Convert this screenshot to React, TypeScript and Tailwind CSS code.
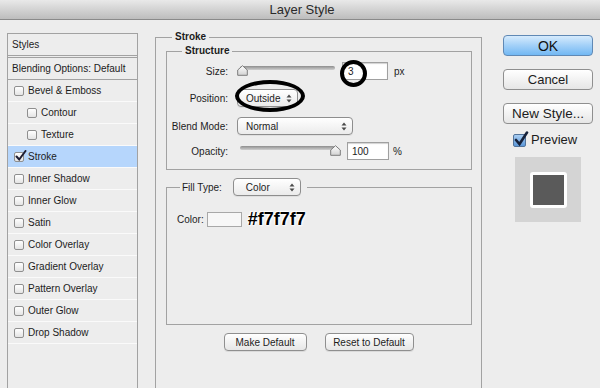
import React from "react";

function Box({ checked }: { checked?: boolean }) {
  return (
    <span className="relative inline-block w-[10px] h-[10px] rounded-[2px] border border-[#8f8f8f] bg-linear-to-b from-white to-[#e4e4e4] shrink-0">
      {checked && (
        <svg className="absolute -top-[3px] left-0" width="12" height="12" viewBox="0 0 12 12">
          <path d="M1.5 6.5 L4.2 9.5 L10.5 1" stroke="#1d1d33" strokeWidth="2" fill="none" strokeLinecap="round" />
        </svg>
      )}
    </span>
  );
}

function Arrows() {
  return (
    <svg width="6" height="9" viewBox="0 0 6 9">
      <path d="M0.5 3.5 L3 0.5 L5.5 3.5 Z" fill="#4a4a4a" />
      <path d="M0.5 5.5 L3 8.5 L5.5 5.5 Z" fill="#4a4a4a" />
    </svg>
  );
}

function Thumb() {
  return (
    <svg width="11" height="11" viewBox="0 0 11 11">
      <defs>
        <linearGradient id="tg" x1="0" y1="0" x2="0" y2="1">
          <stop offset="0" stopColor="#ffffff" />
          <stop offset="1" stopColor="#d2d2d2" />
        </linearGradient>
      </defs>
      <path d="M5.5 0.7 L10.3 5 L10.3 10.3 L0.7 10.3 L0.7 5 Z" fill="url(#tg)" stroke="#7c7c7c" strokeWidth="1" strokeLinejoin="round" />
    </svg>
  );
}

const rows: { label: string; indent?: boolean; checked?: boolean }[] = [
  { label: "Bevel & Emboss" },
  { label: "Contour", indent: true },
  { label: "Texture", indent: true },
  { label: "Stroke", checked: true },
  { label: "Inner Shadow" },
  { label: "Inner Glow" },
  { label: "Satin" },
  { label: "Color Overlay" },
  { label: "Gradient Overlay" },
  { label: "Pattern Overlay" },
  { label: "Outer Glow" },
  { label: "Drop Shadow" },
];

export default function App() {
  return (
    <div className="w-[600px] h-[388px] bg-[#ededed] overflow-hidden font-['Liberation_Sans',Arial,sans-serif] text-[#1c1c1c]">
      {/* Title bar */}
      <div className="h-[20px] border-b border-[#8a8a8a] bg-linear-to-b from-[#e9e9e9] to-[#bdbdbd] flex items-center justify-center text-[13px] text-[#2a2a2a] leading-none">
        <span className="ml-[4px]">Layer Style</span>
      </div>

      <div className="flex h-[368px] pl-[7px] overflow-hidden">
        {/* Left styles list */}
        <div className="w-[131px] h-[400px] mt-[13px] shrink-0 border-x border-t border-[#a2a2a2] text-[10px]">
          <div className="h-[22px] border-b border-[#a2a2a2] flex items-center pl-[4px]">Styles</div>
          <div className="h-[23px] mt-px border-y border-[#a2a2a2] flex items-center pl-[4px]">Blending Options: Default</div>
          {rows.map((r) => (
            <div
              key={r.label}
              className={
                "h-[22px] border-b border-[#fafafa] flex items-center gap-[3px] " +
                (r.indent ? "pl-[19px] " : "pl-[6px] ") +
                (r.checked ? "bg-[#b6d6fc]" : "")
              }
            >
              <Box checked={r.checked} />
              <span className="ml-px">{r.label}</span>
            </div>
          ))}
        </div>

        {/* Middle: Stroke */}
        <fieldset className="ml-[17px] mt-[10px] w-[327px] h-[400px] shrink-0 border border-[#a2a2a2]">
          <legend className="ml-[16px] px-[3px] text-[10px] font-bold leading-[14px]">Stroke</legend>

          <fieldset className="ml-[10px] mr-[9px] border border-[#a2a2a2] pt-[4px] pb-[9px]">
            <legend className="ml-[15px] px-[3px] text-[10px] font-bold leading-[14px]">Structure</legend>

            {/* Size */}
            <div className="flex h-[18px] items-center text-[10px]">
              <span className="w-[61px] text-right">Size:</span>
              <div className="relative ml-[9px] w-[100px] h-[18px]">
                <div className="absolute left-[3px] top-[4px] w-[95px] h-[4px] rounded-full bg-linear-to-b from-[#8e8e8e] to-[#cfcfcf]" />
                <div className="absolute left-0 top-[3px] flex">
                  <Thumb />
                </div>
              </div>
              <div className="relative ml-[5px] w-[46px] h-[18px] border border-[#a0a0a0] bg-white shadow-[inset_0_1px_1px_rgba(0,0,0,0.18)] flex items-center pl-[5px]">
                3
                <div className="absolute -left-[3px] -top-[3px] w-[27px] h-[27px] rounded-full border-[4px] border-black" />
              </div>
              <span className="ml-[6px]">px</span>
            </div>

            {/* Position */}
            <div className="flex h-[18px] mt-[9px] items-center text-[10px]">
              <span className="w-[61px] text-right">Position:</span>
              <div className="relative ml-[9px] w-[61px] h-[18px] rounded-[4px] border border-[#8e8e8e] bg-linear-to-b from-white to-[#ebebeb] flex items-center justify-between pl-[8px] pr-[5px] shadow-[0_1px_0_rgba(0,0,0,0.06)]">
                <span>Outside</span>
                <Arrows />
                <div className="absolute -left-[3px] -top-[10px] w-[70px] h-[32px] rounded-[50%] border-[4px] border-black" />
              </div>
            </div>

            {/* Blend Mode */}
            <div className="flex h-[18px] mt-[10px] items-center text-[10px]">
              <span className="w-[61px] text-right">Blend Mode:</span>
              <div className="ml-[9px] w-[116px] h-[18px] rounded-[4px] border border-[#8e8e8e] bg-linear-to-b from-white to-[#ebebeb] flex items-center justify-between pl-[8px] pr-[5px] shadow-[0_1px_0_rgba(0,0,0,0.06)]">
                <span>Normal</span>
                <Arrows />
              </div>
            </div>

            {/* Opacity */}
            <div className="flex h-[18px] mt-[7px] items-center text-[10px]">
              <span className="w-[61px] text-right">Opacity:</span>
              <div className="relative ml-[9px] w-[105px] h-[18px]">
                <div className="absolute left-[3px] top-[4px] w-[95px] h-[4px] rounded-full bg-linear-to-b from-[#8e8e8e] to-[#cfcfcf]" />
                <div className="absolute left-[93px] top-[3px] flex">
                  <Thumb />
                </div>
              </div>
              <div className="ml-[5px] w-[42px] h-[18px] border border-[#a0a0a0] bg-white shadow-[inset_0_1px_1px_rgba(0,0,0,0.18)] flex items-center pl-[4px]">
                100
              </div>
              <span className="ml-[4px]">%</span>
            </div>
          </fieldset>

          {/* Fill type */}
          <fieldset className="ml-[10px] mr-[9px] mt-[8px] h-[147px] border border-[#a2a2a2]">
            <legend className="ml-[13px] pl-[2px] pr-[6px] text-[10px]">
              <div className="flex items-center h-[18px]">
                <span>Fill Type:</span>
                <div className="ml-[11px] w-[68px] h-[18px] rounded-[4px] border border-[#8e8e8e] bg-linear-to-b from-white to-[#ebebeb] flex items-center justify-between pl-[12px] pr-[5px] shadow-[0_1px_0_rgba(0,0,0,0.06)]">
                  <span>Color</span>
                  <Arrows />
                </div>
              </div>
            </legend>
            <div className="flex items-center mt-[14px] pl-[10px] text-[10px]">
              <span>Color:</span>
              <div className="ml-[3px] w-[35px] h-[15px] border border-[#a8a8a8] bg-[#f7f7f7]" />
              <span className="ml-[6px] text-[18px] font-bold leading-none text-black [text-shadow:0_0_2px_#fff,0_0_2px_#fff,1px_1px_2px_#fff,-1px_-1px_1px_#fff]">
                #f7f7f7
              </span>
            </div>
          </fieldset>

          <div className="flex justify-center gap-[18px] mt-[8px] text-[10px]">
            <button className="w-[83px] h-[18px] rounded-[4px] border border-[#8f8f8f] bg-linear-to-b from-white to-[#e6e6e6] shadow-[0_1px_0_rgba(0,0,0,0.08)]">
              Make Default
            </button>
            <button className="w-[89px] h-[18px] rounded-[4px] border border-[#8f8f8f] bg-linear-to-b from-white to-[#e6e6e6] shadow-[0_1px_0_rgba(0,0,0,0.08)]">
              Reset to Default
            </button>
          </div>
        </fieldset>

        {/* Right column */}
        <div className="ml-[21px] mt-[15px] w-[90px] shrink-0 flex flex-col">
          <button className="h-[21px] w-[90px] rounded-[4px] border border-[#6089b5] bg-linear-to-b from-[#d6ebfd] via-[#a2d0f8] to-[#72b8f3] text-[14px] leading-none text-[#111]">
            OK
          </button>
          <button className="mt-[13px] h-[21px] w-[90px] rounded-[4px] border border-[#8f8f8f] bg-linear-to-b from-white to-[#e6e6e6] text-[13px] leading-none">
            Cancel
          </button>
          <button className="mt-[13px] h-[21px] w-[90px] rounded-[4px] border border-[#8f8f8f] bg-linear-to-b from-white to-[#e6e6e6] text-[13.5px] leading-none">
            New Style...
          </button>
          <div className="mt-[9px] ml-[10px] h-[14px] flex items-center gap-[5px] text-[13px]">
            <span className="relative inline-block w-[13px] h-[13px] rounded-[2px] border border-[#52739a] bg-linear-to-b from-[#a8cdf2] to-[#5b97d8] shrink-0">
              <svg className="absolute -top-[4px] left-0" width="15" height="16" viewBox="0 0 15 16">
                <path d="M2 9 L5.5 13 L13 1.5" stroke="#16213a" strokeWidth="2.6" fill="none" strokeLinecap="round" />
              </svg>
            </span>
            <span>Preview</span>
          </div>
          <div className="mt-[10px] ml-[12px] w-[66px] h-[65px] bg-[#d4d4d4] flex items-center justify-center">
            <div className="w-[37px] h-[36px] rounded-[3px] border-[3px] border-white bg-[#5a5a5a]" />
          </div>
        </div>
      </div>
    </div>
  );
}
